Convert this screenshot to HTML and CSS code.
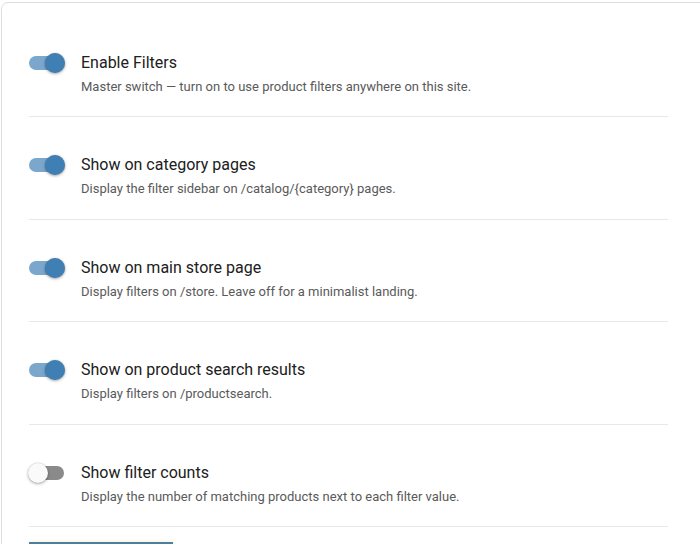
FILE: index.html
```html
<!DOCTYPE html>
<html>
<head>
<meta charset="utf-8">
<link rel="stylesheet" href="styles.css">
</head>
<body>
<div class="card">
  <div class="list">
    <div class="row">
      <span class="toggle on"><span class="track"></span><span class="knob"></span></span>
      <div class="text">
        <div class="title">Enable Filters</div>
        <div class="desc">Master switch — turn on to use product filters anywhere on this site.</div>
      </div>
    </div>
    <div class="row">
      <span class="toggle on"><span class="track"></span><span class="knob"></span></span>
      <div class="text">
        <div class="title">Show on category pages</div>
        <div class="desc">Display the filter sidebar on /catalog/{category} pages.</div>
      </div>
    </div>
    <div class="row">
      <span class="toggle on"><span class="track"></span><span class="knob"></span></span>
      <div class="text">
        <div class="title">Show on main store page</div>
        <div class="desc">Display filters on /store. Leave off for a minimalist landing.</div>
      </div>
    </div>
    <div class="row">
      <span class="toggle on"><span class="track"></span><span class="knob"></span></span>
      <div class="text">
        <div class="title">Show on product search results</div>
        <div class="desc">Display filters on /productsearch.</div>
      </div>
    </div>
    <div class="row">
      <span class="toggle"><span class="track"></span><span class="knob"></span></span>
      <div class="text">
        <div class="title">Show filter counts</div>
        <div class="desc">Display the number of matching products next to each filter value.</div>
      </div>
    </div>
  </div>
  <button class="save" aria-label="Save settings"></button>
</div>
</body>
</html>
```
FILE: styles.css
```css
html, body {
  margin: 0;
  padding: 0;
  background: #ffffff;
  overflow: hidden;
  font-family: Roboto, "Liberation Sans", sans-serif;
}
.card {
  margin: 2px 0 0 1px;
  width: 800px;
  border: 1px solid #dedede;
  border-radius: 7px;
  padding: 11.7px 0 40px 27px;
  background: #fff;
}
.list {
  width: 639px;
}
.row {
  display: flex;
  align-items: flex-start;
  gap: 16px;
  padding: 38px 0 20.5px 0;
  border-bottom: 1px solid #e8e8e8;
}
.toggle {
  position: relative;
  flex: 0 0 36px;
  width: 36px;
  height: 20px;
  margin-top: 0;
}
.track {
  position: absolute;
  left: 0;
  top: 3px;
  width: 35px;
  height: 14px;
  border-radius: 7px;
  background: #8a8a8a;
}
.knob {
  position: absolute;
  left: -1px;
  top: 0;
  width: 20px;
  height: 20px;
  border-radius: 50%;
  background: #fafafa;
  box-shadow: 0 1px 3px rgba(0,0,0,0.35), 0 0 1px rgba(0,0,0,0.2);
}
.toggle.on .track {
  background: #7ba7cd;
}
.toggle.on .knob {
  left: 16px;
  background: #3f7fb4;
}
.text {
  display: flex;
  flex-direction: column;
  gap: 5px;
}
.title {
  font-size: 16px;
  line-height: 20px;
  color: #202020;
}
.desc {
  font-size: 13px;
  line-height: 18px;
  color: #5a5a5a;
}
.save {
  display: block;
  margin-top: 15px;
  width: 144px;
  height: 36px;
  padding: 0;
  border: none;
  border-top: 2px solid #4a7f9f;
  background: #dff3f9;
  box-shadow: 0 0 4px rgba(240, 220, 150, 0.5);
}
```
